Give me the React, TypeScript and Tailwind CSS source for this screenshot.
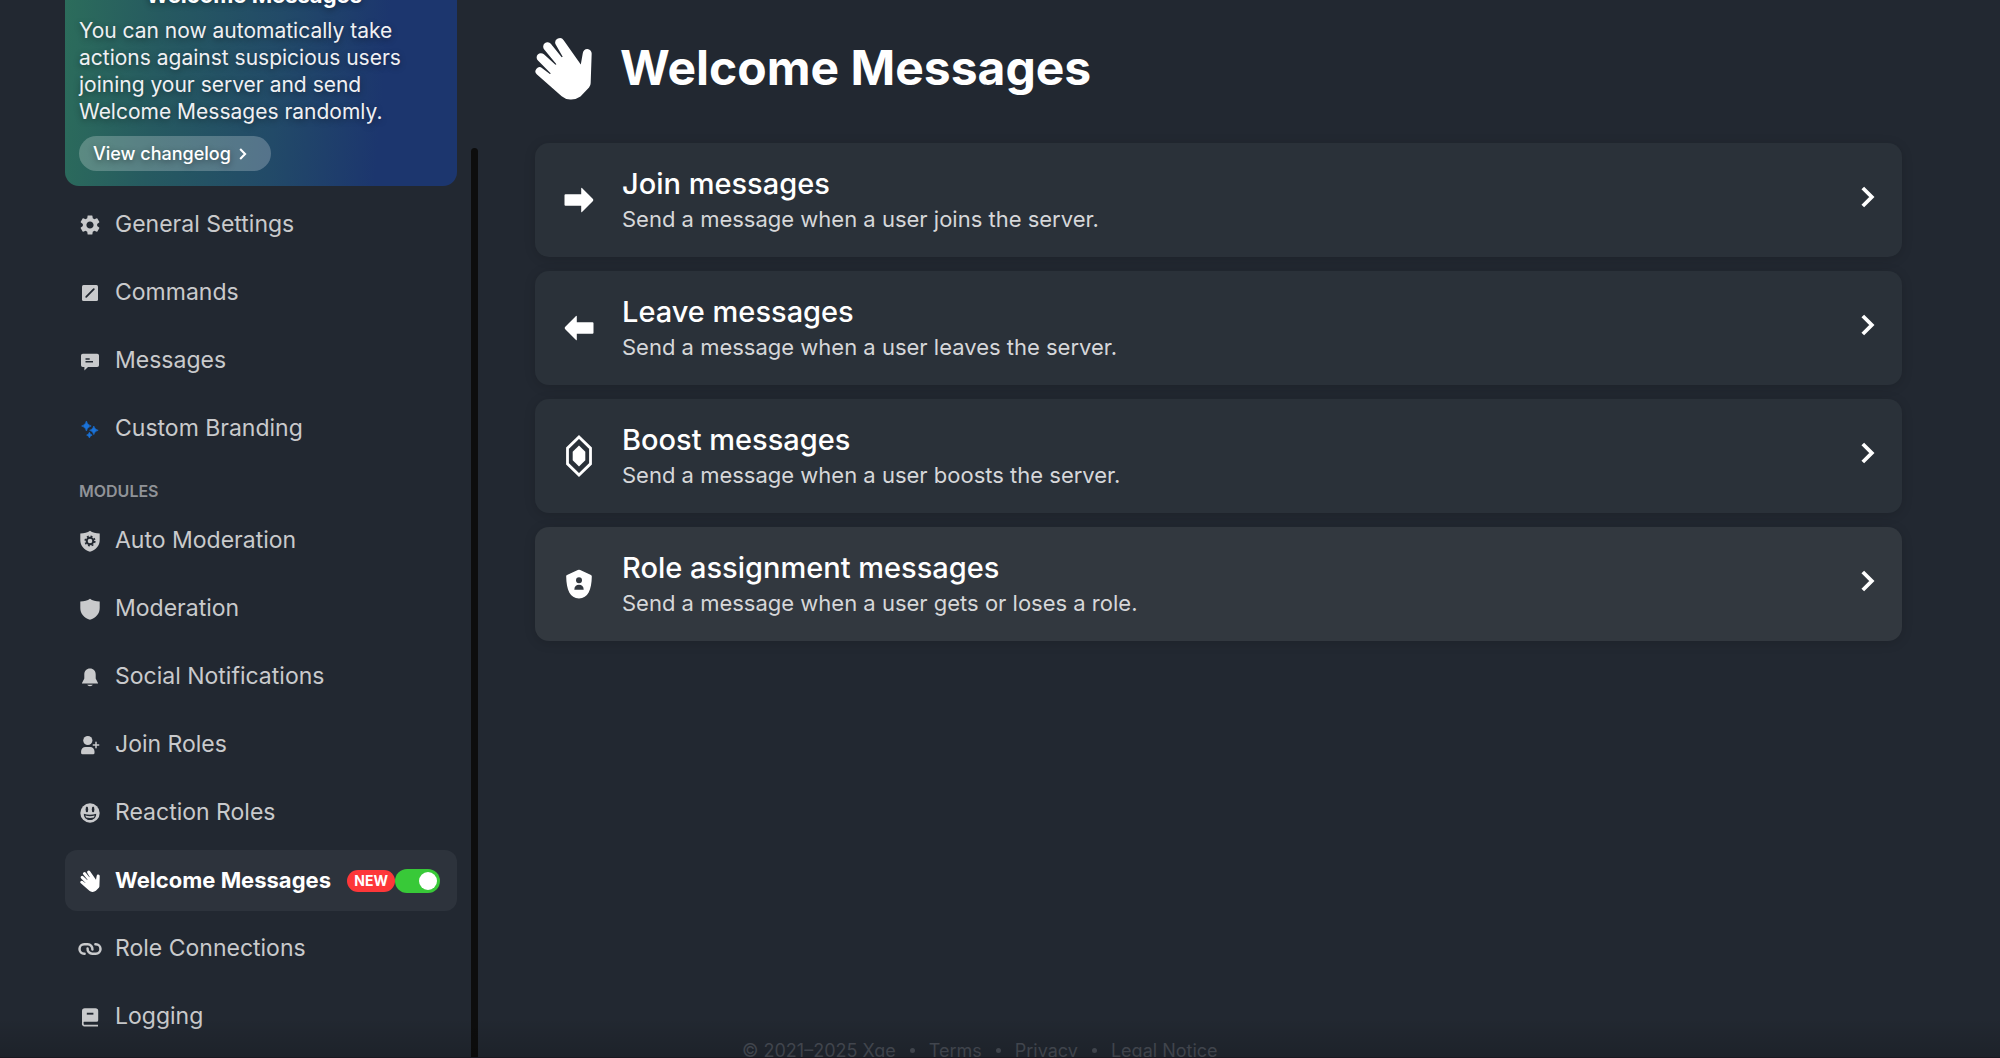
import type { ReactNode } from "react";
import { MdSettings } from "react-icons/md";

const SHIELD =
  "M12 1.7C9.6 3.5 6.2 4.3 2.3 4.4V11c0 5.9 3.7 9.7 9.7 11.8 6-2.1 9.7-5.9 9.7-11.8V4.4C17.8 4.3 14.4 3.5 12 1.7z";

function Icon({ children }: { children: ReactNode }) {
  return (
    <svg viewBox="0 0 24 24" className="size-6 shrink-0" fill="currentColor" aria-hidden="true">
      {children}
    </svg>
  );
}

function WaveHand({ className }: { className: string }) {
  return (
    <svg viewBox="14 18 173 193" className={className} fill="currentColor" aria-hidden="true">
      <path d="M101 30 153 104 159 70A13.5 13.5 0 0 1 186 71L183 160Q183 168 178 174L152 201Q138 211 121 210 105 209 95 200L20 134A12 12 0 0 1 36 115L59 133 62 131 23 92A12.5 12.5 0 0 1 41 73L76 105 79 103 42 58A13 13 0 0 1 62 41L95 82 98 80 76 42A14 14 0 0 1 101 30z" />
    </svg>
  );
}

function Chevron({ className }: { className: string }) {
  return (
    <svg viewBox="0 0 14 22" className={className} fill="none" stroke="currentColor" strokeWidth="3.8" aria-hidden="true">
      <path d="M1.8 2 10.8 11 1.8 20" />
    </svg>
  );
}

const general = [
  { label: "General Settings", icon: <MdSettings className="size-6 shrink-0" /> },
  {
    label: "Commands",
    icon: (
      <Icon>
        <rect x="4" y="4" width="16" height="16" rx="1.5" />
        <path d="M8.2 15.8 15.8 8.2" stroke="#222831" strokeWidth="1.8" strokeLinecap="round" />
      </Icon>
    ),
  },
  {
    label: "Messages",
    icon: (
      <Icon>
        <path d="M4.8 4.7h14.4A1.8 1.8 0 0 1 21 6.5v9.7a1.8 1.8 0 0 1-1.8 1.8H10l-3.6 3.6V18H4.8A1.8 1.8 0 0 1 3 16.2V6.5A1.8 1.8 0 0 1 4.8 4.7z" />
        <path d="M7.5 9.9h4.2M7.5 12.8H15" stroke="#222831" strokeWidth="1.5" />
      </Icon>
    ),
  },
  {
    label: "Custom Branding",
    icon: (
      <span className="text-[#1a72d8]">
        <Icon>
          <g stroke="currentColor" strokeWidth=".6">
            <path d="M8.4 4Q9.3 8.2 13.2 9 9.3 9.8 8.4 14 7.5 9.8 3.6 9 7.5 8.2 8.4 4z" />
            <path d="M15.8 9Q16.6 12.6 20.2 13.3 16.6 14 15.8 17.6 15 14 11.6 13.3 15 12.6 15.8 9z" />
            <path d="M11.4 15.2Q12 17.6 14.2 18.1 12 18.6 11.4 21 10.8 18.6 8.6 18.1 10.8 17.6 11.4 15.2z" />
          </g>
        </Icon>
      </span>
    ),
  },
];

const modules = [
  {
    label: "Auto Moderation",
    icon: (
      <Icon>
        <path d={SHIELD} />
        <circle cx="12" cy="12" r="3.3" fill="none" stroke="#222831" strokeWidth="2" />
        <circle cx="12" cy="12" r="4.8" fill="none" stroke="#222831" strokeWidth="1.6" strokeDasharray="1.9 1.87" />
      </Icon>
    ),
  },
  {
    label: "Moderation",
    icon: (
      <Icon>
        <path d={SHIELD} />
      </Icon>
    ),
  },
  {
    label: "Social Notifications",
    icon: (
      <Icon>
        <path d="M12 3.4c3.5 0 5.7 2.5 5.7 6v4.2l2.3 4.3c.2.4 0 .7-.4.7H4.4c-.4 0-.6-.3-.4-.7l2.3-4.3V9.4c0-3.5 2.2-6 5.700-6z" />
        <path d="M9.2 19.7h5.6a2.9 2 0 0 1-5.6 0z" />
      </Icon>
    ),
  },
  {
    label: "Join Roles",
    icon: (
      <Icon>
        <circle cx="9.8" cy="7.5" r="4.6" />
        <path d="M7.4 14h4.8a4.3 4.3 0 0 1 4.3 4.3v1.6a1.4 1.4 0 0 1-1.4 1.4H4.5a1.4 1.4 0 0 1-1.4-1.4v-1.6A4.3 4.3 0 0 1 7.4 14z" />
        <path d="M18 9.3v5.4M15.3 12h5.4" stroke="currentColor" strokeWidth="1.5" strokeLinecap="round" />
      </Icon>
    ),
  },
  {
    label: "Reaction Roles",
    icon: (
      <Icon>
        <circle cx="12" cy="12" r="9.7" />
        <g fill="#222831">
          <ellipse cx="8.9" cy="8.4" rx="1.3" ry="2.9" />
          <ellipse cx="15.1" cy="8.4" rx="1.3" ry="2.9" />
          <path d="M5.8 12.8c4 1.3 8.4 1.3 12.4 0 0 4-2.6 6.3-6.2 6.3s-6.2-2.3-6.2-6.3z" />
        </g>
        <path d="M7.3 14.6c3.1.8 6.3.8 9.4 0-.2.8-.5 1.4-.9 1.9-2.5.6-5.1.6-7.6 0-.4-.5-.7-1.1-.9-1.9z" />
      </Icon>
    ),
  },
  { label: "Welcome Messages", icon: <WaveHand className="mx-0.5 h-[22px] w-5 shrink-0" />, active: true },
  {
    label: "Role Connections",
    icon: (
      <Icon>
        <g fill="none" stroke="currentColor" strokeWidth="2.5" strokeLinecap="round">
          <path d="M6.6 16.7H6.2A4.7 4.7 0 0 1 6.2 7.3H9.7A4.7 4.7 0 0 1 14.4 12.5" />
          <path d="M17.4 7.3H17.8A4.7 4.7 0 0 1 17.8 16.7H14.3A4.7 4.7 0 0 1 9.6 11.5" />
        </g>
      </Icon>
    ),
  },
  {
    label: "Logging",
    icon: (
      <Icon>
        <path d="M6.8 3.2h10.6A2.8 2.8 0 0 1 20.2 6v9.2a1.6 1.6 0 0 1-1.6 1.6H7.2a3 3 0 0 0-3.2 1V6a2.8 2.8 0 0 1 2.8-2.8z" />
        <path d="M20 20.7H6.4a1.8 1.8 0 0 1-1.7-2" fill="none" stroke="currentColor" strokeWidth="1.7" />
        <path d="M4 15h1.600v4.500H4z" />
        <path d="M8.8 8.7h6.6" stroke="#222831" strokeWidth="1.9" />
      </Icon>
    ),
  },
];

const cards = [
  {
    title: "Join messages",
    text: "Send a message when a user joins the server.",
    icon: <path d="M1.5 15.2h15.700V9.300q.1-.9.8-.4l11 11.200q.6.900 0 1.800L18 33.100q-.7.500-.8-.4v-5.900H1.500q-1 0-1-1v-9.600q0-1 1-1z" />,
  },
  {
    title: "Leave messages",
    text: "Send a message when a user leaves the server.",
    icon: <path d="M28.5 15.2H12.8V9.3q-.1-.9-.8-.4L1 20.100q-.6.900 0 1.800l11 11.200q.7.500.8-.4v-5.900h15.700q1 0 1-1v-9.600q0-1-1-1z" />,
  },
  {
    title: "Boost messages",
    text: "Send a message when a user boosts the server.",
    icon: (
      <>
        <path d="M15 2 26.5 13.2V28.8L15 40 3.5 28.8V13.2z" fill="none" stroke="currentColor" strokeWidth="2.8" />
        <path d="M15 10.6 21.3 16.8V25.2L15 31.4 8.7 25.2V16.8z" />
      </>
    ),
  },
  {
    title: "Role assignment messages",
    text: "Send a message when a user gets or loses a role.",
    icon: (
      <>
        <path d="M13.8 7.1q1.200-.8 2.400 0L27 12q.9.500.8 1.600C27.600 27 24 35.300 15 35.600 6 35.300 2.400 27 2.200 13.600 2.100 12.500 2.500 12.200 3 12z" />
        <g fill="#32383f">
          <circle cx="15" cy="17.3" r="3" />
          <path d="M10.3 26.8c0-3.4 2-5 4.7-5s4.7 1.6 4.7 5z" />
        </g>
      </>
    ),
    hovered: true,
  },
];

const footerLinks = ["Terms", "Privacy", "Legal Notice"];

function NavItem({ item }: { item: { label: string; icon: ReactNode; active?: boolean } }) {
  if (item.active) {
    return (
      <li className="flex h-[61px] items-center rounded-xl bg-[#2d333c] pr-[17px] text-white">
        <a href="#" className="flex flex-1 items-center gap-[13px] pl-[13px] text-[22px] font-bold whitespace-nowrap">
          {item.icon}
          {item.label}
        </a>
        <span className="flex h-[22px] items-center rounded-full bg-[#fd3739] px-[7px] text-sm font-bold">NEW</span>
        <input
          type="checkbox"
          role="switch"
          defaultChecked
          aria-label="Enable Welcome Messages"
          className="flex h-6 w-[45px] appearance-none items-center rounded-full bg-gray-600 px-[3px] before:size-[18px] before:rounded-full before:bg-white checked:justify-end checked:bg-[#38c938]"
        />
      </li>
    );
  }
  return (
    <li>
      <a href="#" className="flex h-[61px] items-center gap-[13px] rounded-xl pl-[13px] text-[23px] text-[#c9cacc] hover:bg-[#2d333c]">
        {item.icon}
        {item.label}
      </a>
    </li>
  );
}

function Sidebar() {
  return (
    <aside className="flex w-[413px] shrink-0">
      <div className="flex-1">
        <div className="-mt-[31px] rounded-[14px] bg-linear-[95deg,#2c6d5b_0%,#265a60_24%,#224a68_54%,#1c366e_80%,#1c366e_100%] px-3.5 pt-3 pb-[15px] text-white [text-shadow:0_2px_6px_rgba(0,0,0,0.4)]">
          <h2 className="mb-2 pr-3.5 text-center text-[22px] leading-7 font-bold">Welcome Messages</h2>
          <p className="text-[21px] leading-[27px] text-[#f0f0f3]">
            You can now automatically take
            <br />
            actions against suspicious users
            <br />
            joining your server and send
            <br />
            Welcome Messages randomly.
          </p>
          <button type="button" className="mt-[11px] flex h-[35px] w-48 items-center gap-2 rounded-full bg-white/23 pl-3.5 text-[18px] font-medium [text-shadow:inherit]">
            View changelog
            <Chevron className="h-3 w-2" />
          </button>
        </div>
        <nav>
          <ul className="mt-2 flex flex-col gap-[7px]">
            {general.map((item) => (
              <NavItem key={item.label} item={item} />
            ))}
          </ul>
          <h3 className="mt-5 pl-3.5 text-base leading-6 font-semibold text-[#909398]">MODULES</h3>
          <ul className="mt-[7px] flex flex-col gap-[7px]">
            {modules.map((item) => (
              <NavItem key={item.label} item={item} />
            ))}
          </ul>
        </nav>
      </div>
      {/* scroll thumb */}
      <div className="mt-[148px] ml-3.5 w-[7px] rounded-t-full bg-[#0d0d0d]" />
    </aside>
  );
}

export default function App() {
  return (
    <div className="relative flex h-screen overflow-hidden bg-[#222831] pl-[65px] font-['Inter',sans-serif]">
      <Sidebar />
      <main className="flex flex-1 flex-col pt-9 pr-[98px] pl-[57px]">
        <h1 className="mb-[43px] flex items-center gap-7 text-5xl leading-[64px] font-bold text-white">
          <WaveHand className="h-16 w-[57px]" />
          Welcome Messages
        </h1>
        <div className="flex flex-col gap-3.5">
          {cards.map((card) => (
            <a
              key={card.title}
              href="#"
              className={`flex h-[114px] items-center rounded-[14px] pr-[27px] pl-[29px] text-white shadow-[0_2px_12px_rgba(0,0,0,0.14)] ${
                card.hovered ? "bg-[#32383f]" : "bg-[#2a3139]"
              }`}
            >
              <svg viewBox="0 0 30 42" className="mr-7 h-[42px] w-[30px] shrink-0" fill="currentColor" aria-hidden="true">
                {card.icon}
              </svg>
              <div className="flex-1 pt-0.5">
                <h2 className="text-[29px] leading-9 font-medium">{card.title}</h2>
                <p className="text-[22px] leading-[34px] text-[#d6d7d9]">{card.text}</p>
              </div>
              <Chevron className="mb-1.5 h-[22px] w-3.5" />
            </a>
          ))}
        </div>
        <footer className="mt-auto flex h-4 items-center gap-3.5 pl-[207px] text-[18px] text-[#484d56]">
          <span>© 2021–2025 Xge</span>
          {footerLinks.map((label) => (
            <div key={label} className="flex items-center gap-3.5">
              <span className="size-[5px] rounded-full bg-[#484d56]" />
              <a href="#">{label}</a>
            </div>
          ))}
        </footer>
      </main>
      {/* bottom fade over the page edge */}
      <div className="pointer-events-none absolute inset-x-0 bottom-0 h-10 border-b border-[#1a1820] bg-linear-to-b from-transparent to-black/15" />
    </div>
  );
}
